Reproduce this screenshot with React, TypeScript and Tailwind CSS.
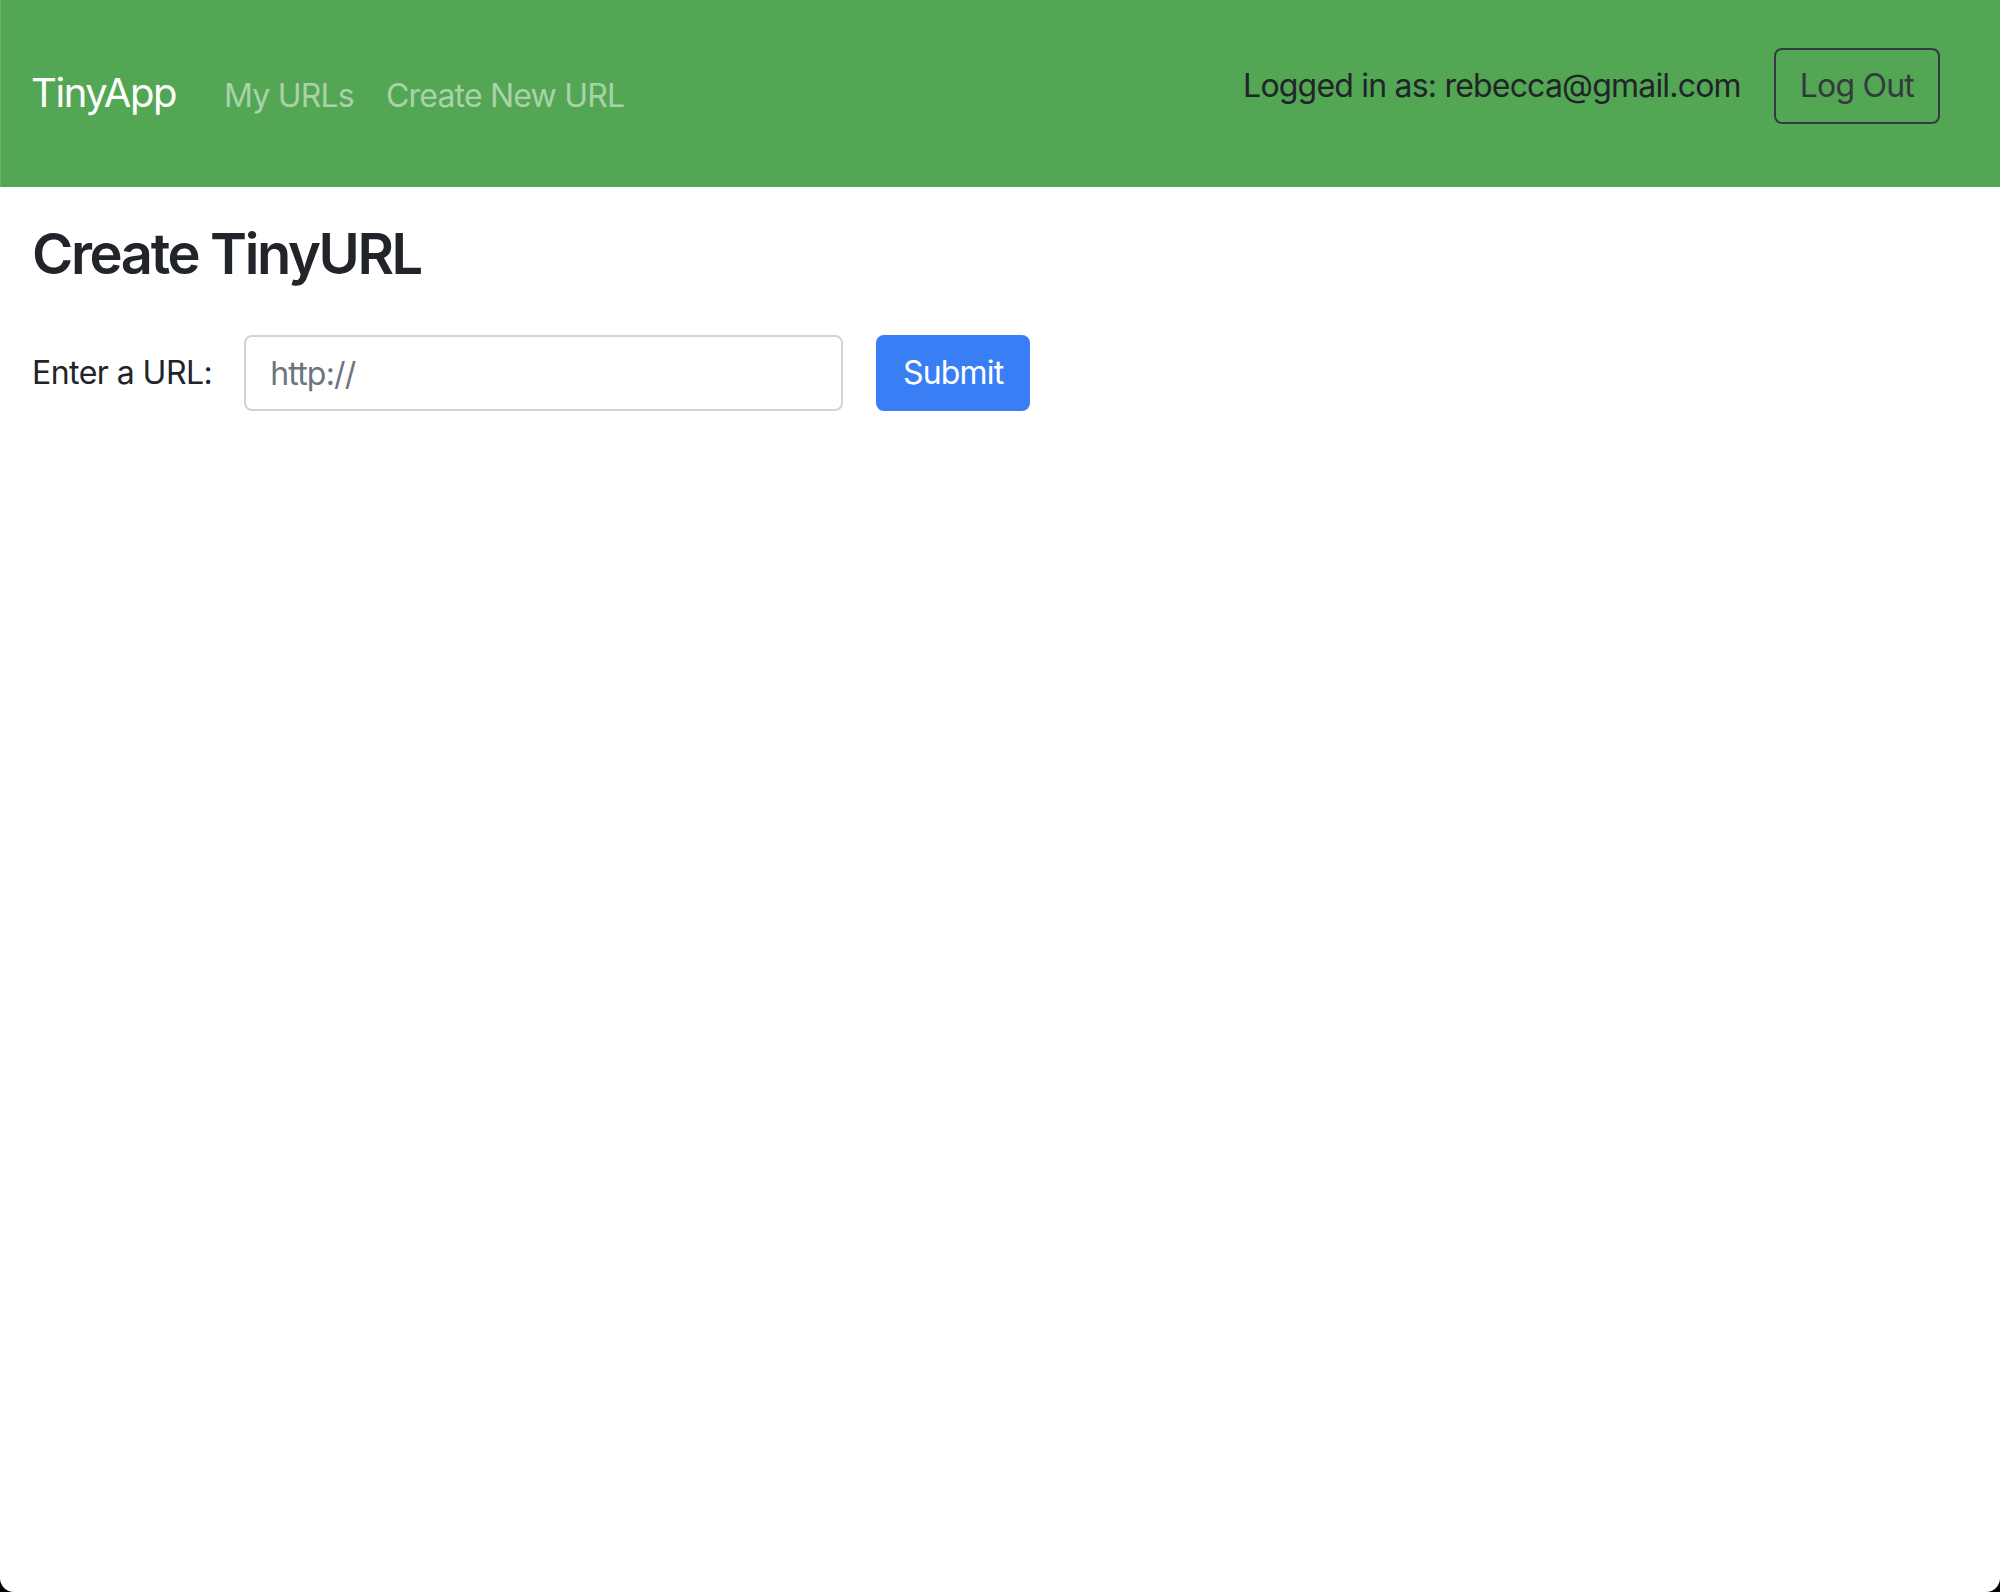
import { useState } from "react";

const FONT = "font-['Inter','Liberation_Sans',sans-serif]";

export default function App() {
  const [url, setUrl] = useState("");

  return (
    <div className={`h-[1592px] bg-black ${FONT}`}>
      <div className="h-full bg-white rounded-b-[14px] overflow-hidden flex flex-col">
        {/* NAVBAR */}
        <nav className="h-[187px] shrink-0 bg-[#53a653] border-l border-[#6cb46c] flex items-start justify-between pl-[30px] pr-[60px]">
          <div className="flex items-baseline mt-[63px]">
            <a href="#" className="text-[40px] leading-[60px] tracking-[-0.035em] text-white mr-[48px]">
              TinyApp
            </a>
            <a href="#" className="text-[32px] leading-[48px] tracking-[-0.025em] text-white/50 mr-[32px]">
              My URLs
            </a>
            <a href="#" className="text-[32px] leading-[48px] tracking-[-0.025em] text-white/50">
              Create New URL
            </a>
          </div>

          <div className="flex items-center gap-[33px] mt-[48px]">
            <span className="text-[32px] leading-[48px] tracking-[-0.025em] text-[#212529]">
              Logged in as: rebecca@gmail.com
            </span>
            <button className="border-2 border-[#343a40] rounded-[8px] px-[24px] py-[12px] text-[32px] leading-[48px] tracking-[-0.025em] text-[#343a40]">
              Log Out
            </button>
          </div>
        </nav>

        {/* MAIN */}
        <main className="px-8 text-[#212529]">
          <h1 className="mt-[34px] text-[56px] leading-[67px] tracking-[-0.042em] font-semibold">
            Create TinyURL
          </h1>

          <form className="flex items-center mt-[47px]" onSubmit={(e) => e.preventDefault()}>
            <label className="text-[32px] leading-[48px] tracking-[-0.017em] mr-[32px]">Enter a URL:</label>
            <input
              type="text"
              value={url}
              onChange={(e) => setUrl(e.target.value)}
              placeholder="http://"
              className="w-[599px] h-[76px] border-2 border-[#ced4da] rounded-[8px] px-[24px] text-[32px] tracking-[-0.025em] text-[#495057] placeholder:text-[#6c757d] outline-none"
            />
            <button
              type="submit"
              className="ml-[33px] h-[76px] w-[154px] bg-[#3a7ef6] border-2 border-[#3a7ef6] rounded-[8px] text-[32px] leading-[48px] tracking-[-0.025em] text-white"
            >
              Submit
            </button>
          </form>
        </main>
      </div>
    </div>
  );
}
